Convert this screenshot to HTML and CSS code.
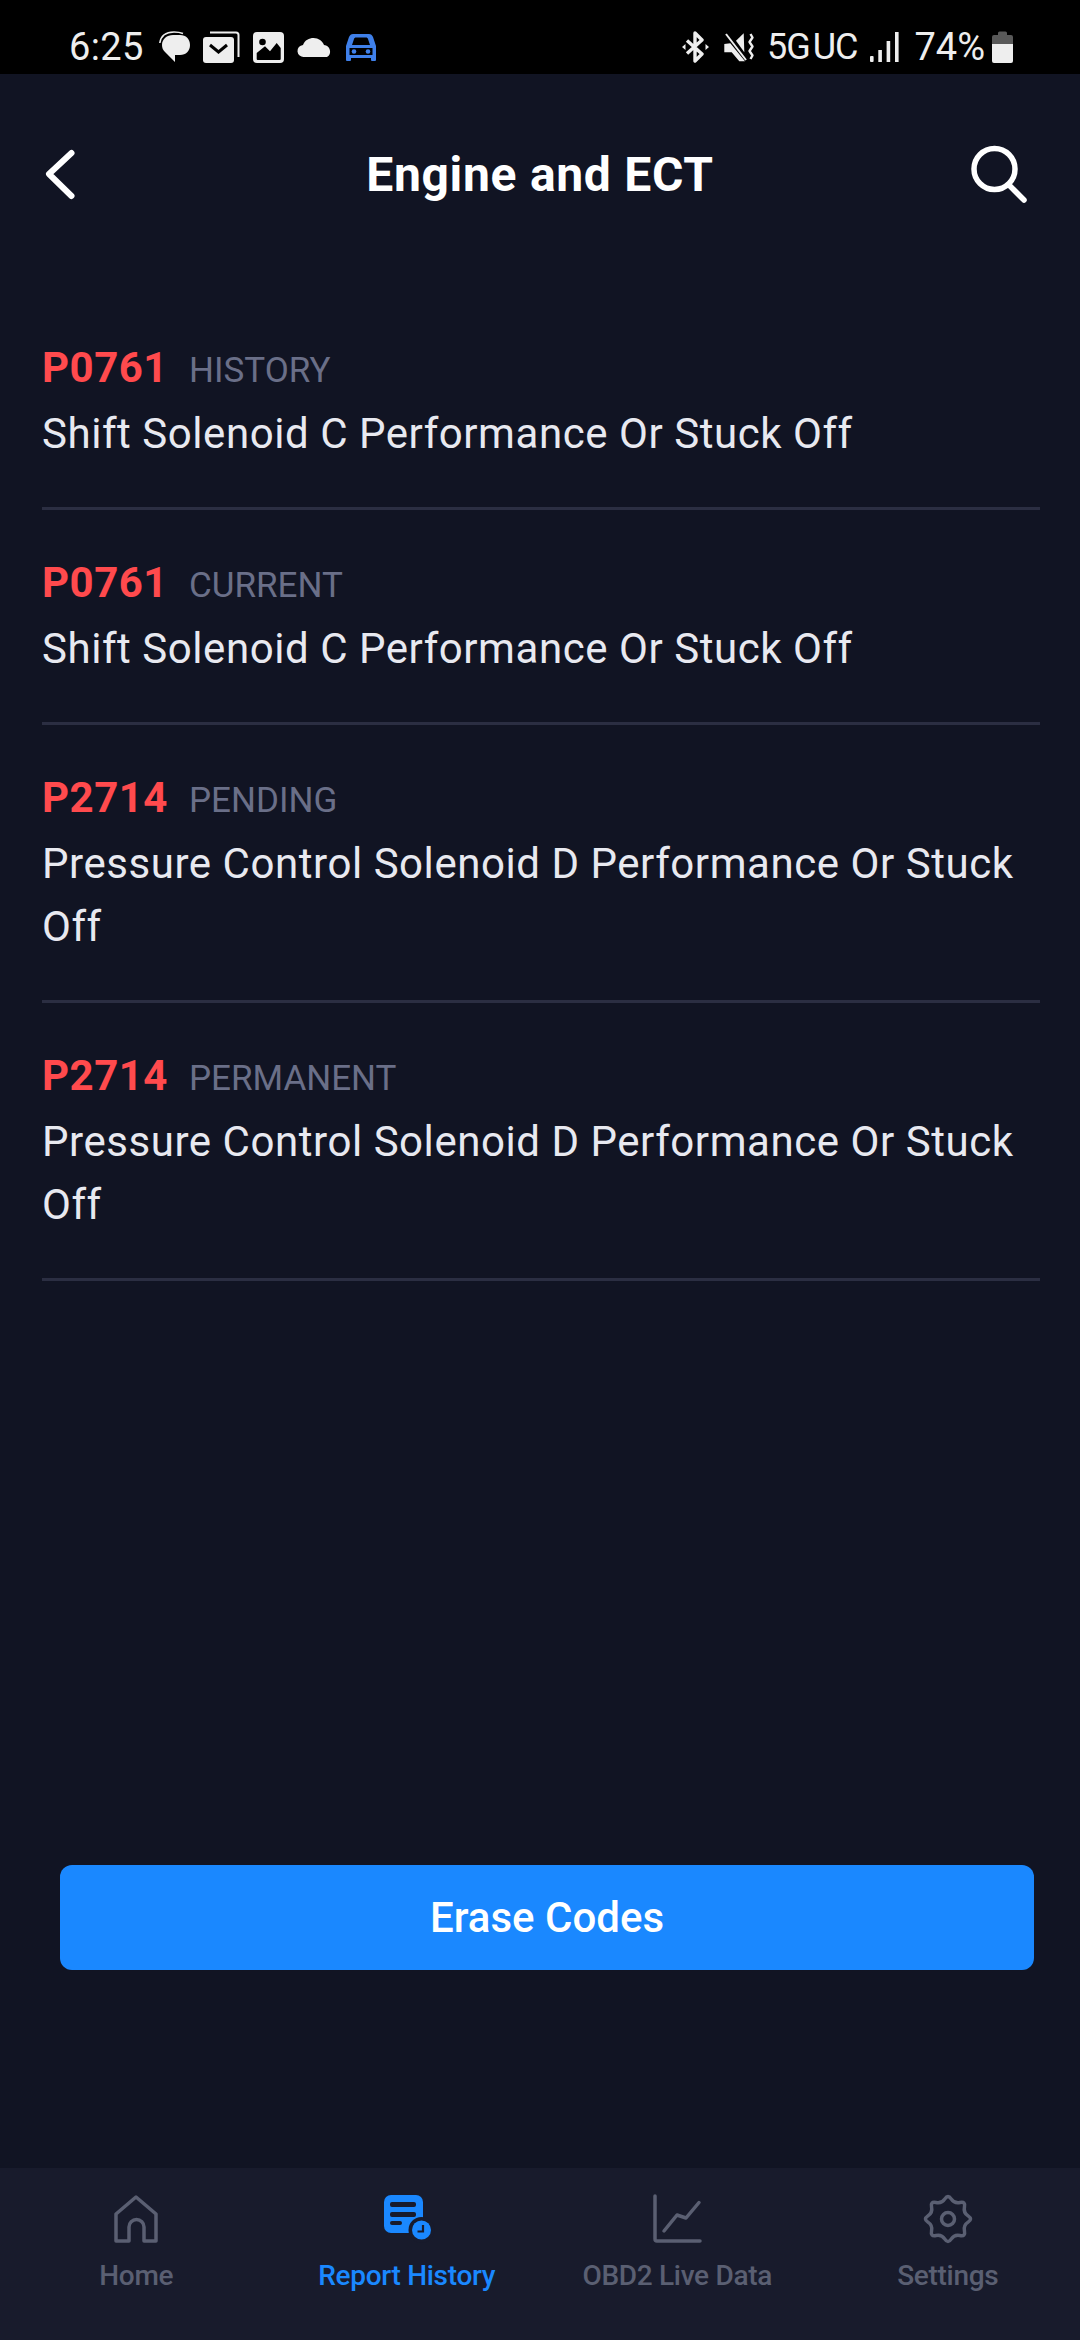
FILE: index.html
```html
<!DOCTYPE html>
<html lang="en">
<head>
<meta charset="utf-8">
<title>Engine and ECT</title>
<link rel="stylesheet" href="styles.css">
</head>
<body>
<div class="app">
  <div class="status">
    <div class="status-left">
      <span class="time">6:25</span>
      <svg class="i-msg" width="31" height="32" viewBox="0 0 31 32"><path d="M.8 12C2 4 8 1 15 1c3 0 6 .3 9 1.500" fill="none" stroke="#eee" stroke-width="1.600"/><path d="M3 14C3 8 8 4 14 4h7c6 0 10 4 10 10s-4 10-10 10h-5v7L6 21C4 19 3 17 3 14z" fill="#eee"/></svg>
      <svg class="i-mail" width="37" height="32" viewBox="0 0 37 32"><path d="M7 1.500h26a2.500 2.500 0 0 1 2.500 2.500v22" fill="none" stroke="#eee" stroke-width="2"/><rect x="0" y="6" width="31" height="26" rx="3" fill="#eee"/><path d="M7 14l8.500 7 8.500-7" fill="none" stroke="#000" stroke-width="3"/></svg>
      <svg class="i-pic" width="31" height="31" viewBox="0 0 31 31"><rect width="31" height="31" rx="4" fill="#eee"/><circle cx="9.500" cy="10" r="3.300" fill="#000"/><path d="M3.700 21L12 14.300l5 5 6.700-8.300 4 5v11a1 1 0 0 1-1 1H4.700a1 1 0 0 1-1-1z" fill="#000"/></svg>
      <svg class="i-cloud" width="36" height="21" viewBox="0 0 36 21"><path d="M7 20a6 6 0 0 1-1-12C8 3 12 1 16.500 1c5 0 9 3 10.500 7a6.500 6.500 0 0 1 3 12z" fill="#eee"/></svg>
      <svg class="i-car" width="30" height="27" viewBox="0 0 30 27"><path d="M7 0h16c2 0 3 1 4 3l3 9v14a1 1 0 0 1-1 1h-3a1 1 0 0 1-1-1v-2H5v2a1 1 0 0 1-1 1H1a1 1 0 0 1-1-1V12l3-9c1-2 2-3 4-3z" fill="#3f80ea"/><path d="M6 11l2-6c.3-1 1-1.500 2-1.500h10c1 0 1.700.5 2 1.500l2 6z" fill="#000"/><path d="M3.500 14h23v7h-23z" fill="#000"/><circle cx="8" cy="17.500" r="2.300" fill="#3f80ea"/><circle cx="22" cy="17.500" r="2.300" fill="#3f80ea"/></svg>
    </div>
    <div class="status-right">
      <svg class="i-bt" width="27" height="32" viewBox="0 0 27 32"><path d="M5 9.500l15 13.500-7 7V2l7 7L5 22.500" fill="none" stroke="#eee" stroke-width="3.400" stroke-linejoin="round"/><path d="M0 16l3.500-3v6zM27 16l-3.500-3v6z" fill="#eee"/></svg>
      <svg class="i-mute" width="30" height="30" viewBox="0 0 30 30"><path d="M.3 12l6-.7L21 29.300h-5.700L7.700 20.300H.3z" fill="#eee"/><path d="M2 2l20 26" stroke="#eee" stroke-width="2"/><path d="M12 8.700L19.700 1.300l.6 19z" fill="#eee"/><path d="M26.500 2l2 3.500-3 4.500 3 4.500-3 4.500 3 4.500-2 3.500" fill="none" stroke="#eee" stroke-width="2.400" stroke-linejoin="round"/></svg>
      <span class="net"><span>5G</span><span>UC</span></span>
      <svg class="i-sig" width="29" height="30" viewBox="0 0 29 30"><rect x="0" y="24" width="3.600" height="6" rx="1" fill="#eee"/><rect x="8.300" y="18" width="3.600" height="12" fill="#eee"/><rect x="16.600" y="9" width="3.600" height="21" fill="#eee"/><rect x="25" y="0" width="3.600" height="30" fill="#eee"/></svg>
      <span class="pct">74%</span>
      <svg class="i-bat" width="21" height="32" viewBox="0 0 21 32"><path d="M6 2a1.500 1.500 0 0 1 1.500-1.500h6A1.500 1.500 0 0 1 15 2v2h4a2 2 0 0 1 2 2v7H0V6a2 2 0 0 1 2-2h4z" fill="#595959"/><path d="M0 13h21v17a2 2 0 0 1-2 2H2a2 2 0 0 1-2-2z" fill="#eee"/></svg>
    </div>
  </div>

  <header class="top">
    <svg class="back" width="60" height="60" viewBox="0 0 60 60"><path d="M35.500 8L13 29l22.500 22" fill="none" stroke="#fff" stroke-width="6" stroke-linecap="round" stroke-linejoin="round"/></svg>
    <h1 class="title">Engine and ECT</h1>
    <svg class="search" width="60" height="60" viewBox="0 0 60 60"><circle cx="24.500" cy="24" r="20.500" fill="none" stroke="#fff" stroke-width="5.500"/><path d="M40 41l14 14" fill="none" stroke="#fff" stroke-width="5.500" stroke-linecap="round"/></svg>
  </header>

  <main class="list">
    <div class="item"><div class="head"><span class="code">P0761</span><span class="state">HISTORY</span></div><p class="desc">Shift Solenoid C Performance Or Stuck Off</p></div>
    <div class="item"><div class="head"><span class="code">P0761</span><span class="state">CURRENT</span></div><p class="desc">Shift Solenoid C Performance Or Stuck Off</p></div>
    <div class="item"><div class="head"><span class="code">P2714</span><span class="state">PENDING</span></div><p class="desc">Pressure Control Solenoid D Performance Or Stuck Off</p></div>
    <div class="item"><div class="head"><span class="code">P2714</span><span class="state">PERMANENT</span></div><p class="desc">Pressure Control Solenoid D Performance Or Stuck Off</p></div>
  </main>

  <div class="action"><button class="erase">Erase Codes</button></div>

  <nav class="tabs">
    <div class="tab">
      <svg width="60" height="56" viewBox="0 0 60 56"><path d="M10 51V24L30 7l20 17v27H38V37a7.500 7.500 0 0 0-15 0v14z" fill="none" stroke="#5a5f72" stroke-width="3.500" stroke-linejoin="round"/></svg>
      <span>Home</span>
    </div>
    <div class="tab active">
      <svg width="60" height="56" viewBox="0 0 60 56"><rect x="7" y="5" width="39" height="38" rx="7" fill="#1a88ff"/><rect x="13" y="12" width="26" height="5" rx="2" fill="#181b2c"/><rect x="13" y="22" width="26" height="5" rx="2" fill="#181b2c"/><rect x="13" y="31" width="12" height="4" rx="2" fill="#181b2c"/><circle cx="44.500" cy="40" r="13" fill="#181b2c"/><circle cx="44.500" cy="40" r="9.500" fill="#1a88ff"/><path d="M46 35v6.500H40.500" fill="none" stroke="#181b2c" stroke-width="2.200"/></svg>
      <span>Report History</span>
    </div>
    <div class="tab">
      <svg width="60" height="56" viewBox="0 0 60 56"><path d="M8 6v43a2 2 0 0 0 2 2h43" fill="none" stroke="#5a5f72" stroke-width="3.500" stroke-linecap="round"/><path d="M17 41l13-16 9 3 13-15.500" fill="none" stroke="#5a5f72" stroke-width="3.500" stroke-linecap="round" stroke-linejoin="round"/></svg>
      <span>OBD2 Live Data</span>
    </div>
    <div class="tab">
      <svg width="60" height="56" viewBox="-30 -29 60 56"><path d="M20.100 3.150Q15.200 6.300 16.450 12Q17.700 17.700 12 16.450Q6.300 15.200 3.150 20.100Q0 25 -3.150 20.100Q-6.300 15.200 -12 16.450Q-17.700 17.700 -16.450 12Q-15.200 6.300 -20.100 3.150Q-25 0 -20.100 -3.150Q-15.200 -6.300 -16.450 -12Q-17.700 -17.700 -12 -16.450Q-6.300 -15.200 -3.150 -20.100Q0 -25 3.150 -20.100Q6.300 -15.200 12 -16.450Q17.700 -17.700 16.450 -12Q15.200 -6.300 20.100 -3.150Q25 0 20.100 3.150Z" fill="none" stroke="#5a5f72" stroke-width="3.500"/><circle r="6.500" fill="none" stroke="#5a5f72" stroke-width="3.500"/></svg>
      <span>Settings</span>
    </div>
  </nav>
</div>
</body>
</html>
```

FILE: styles.css
```css
* { box-sizing: border-box; }
html, body { margin: 0; padding: 0; }
body { background: #111423; font-family: Roboto, "Liberation Sans", sans-serif; }
.app { width: 1080px; height: 2340px; display: flex; flex-direction: column; overflow: hidden; }

.status { height: 74px; flex: none; background: #000; color: #eee; display: flex; justify-content: space-between; align-items: center; padding: 0 67px 0 69px; }
.status-left, .status-right { display: flex; align-items: center; height: 74px; padding-top: 20px; }
.time { font-size: 38px; line-height: 44px; width: 90px; letter-spacing: 0.4px; }
.i-mail, .i-pic { margin-left: 13px; }
.i-cloud, .i-car { margin-left: 13px; }
.i-mute { margin-left: 15px; }
.net { font-size: 36px; line-height: 44px; margin-left: 13px; display: flex; gap: 3px; letter-spacing: -1px; }
.i-sig { margin-left: 13px; }
.pct { font-size: 38px; line-height: 44px; margin-left: 15px; }
.i-bat { margin-left: 7px; }

.top { height: 202px; flex: none; display: grid; grid-template-columns: 1fr auto 1fr; align-items: center; padding: 0 36px; }
.title { margin: 0; font-size: 48px; font-weight: 700; color: #fff; line-height: 60px; letter-spacing: 0.7px; }
.search { justify-self: end; margin-right: 14px; }

.list { padding: 18.500px 40px 0 42px; }
.item { border-bottom: 3px solid #2b2e42; padding: 44px 0 42px; }
.head { display: flex; align-items: baseline; height: 63px; line-height: 57px; }
.code { font-size: 42px; font-weight: 700; color: #ff4a4d; width: 147px; letter-spacing: 0.5px; }
.state { font-size: 35px; color: #6a6f88; }
.desc { margin: 0; font-size: 42px; line-height: 63px; color: #e8e9f0; letter-spacing: 0.55px; }

.action { flex: 1; display: flex; align-items: flex-end; padding: 0 46px 198px 60px; }
.erase { width: 100%; height: 105px; border: 0; border-radius: 12px; background: #1a88ff; color: #fff; font-family: inherit; font-size: 42px; font-weight: 500; padding: 0; }

.tabs { height: 172px; flex: none; background: #181b2c; display: grid; grid-template-columns: repeat(4, 270.500px); padding: 22px 0 0 1px; align-items: start; }
.tab { display: flex; flex-direction: column; align-items: center; color: #5a5f72; font-size: 28px; font-weight: 500; line-height: 40px; letter-spacing: -0.3px; }
.tab svg { display: block; margin-bottom: 10px; }
.tab.active { color: #1a88ff; }
```
